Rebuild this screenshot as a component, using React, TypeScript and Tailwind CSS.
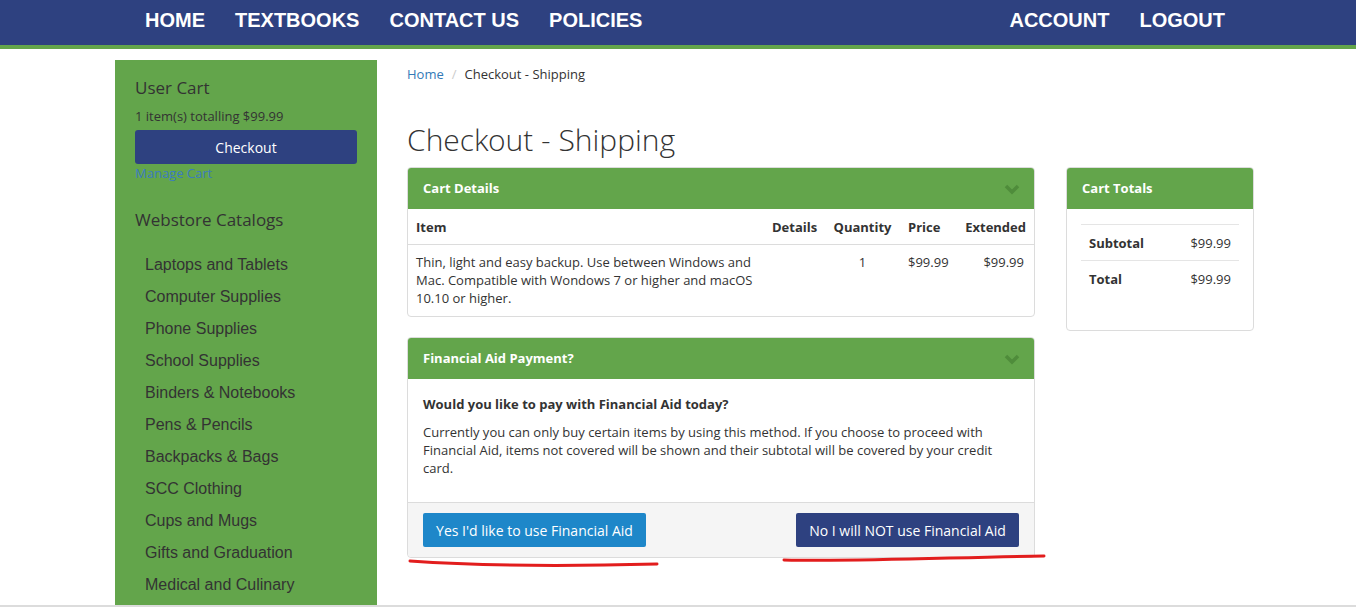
const sans = { fontFamily: '"Open Sans", "Liberation Sans", sans-serif' }

const catalogs = [
  'Laptops and Tablets',
  'Computer Supplies',
  'Phone Supplies',
  'School Supplies',
  'Binders & Notebooks',
  'Pens & Pencils',
  'Backpacks & Bags',
  'SCC Clothing',
  'Cups and Mugs',
  'Gifts and Graduation',
  'Medical and Culinary',
]

function Chevron() {
  return (
    <svg width="16" height="12" viewBox="0 0 16 12" className="text-[#4f8c3b]">
      <path d="M2 3 L8 9 L14 3" fill="none" stroke="currentColor" strokeWidth="3.5" />
    </svg>
  )
}

function PanelHeader({ title, chevron = true }: { title: string; chevron?: boolean }) {
  return (
    <div className="h-[41px] bg-[#63a54b] flex items-center justify-between pl-[15px] pr-[14px] rounded-t-[3px]">
      <span className="text-[13px] font-bold text-white">{title}</span>
      {chevron && <Chevron />}
    </div>
  )
}

export default function App() {
  return (
    <div className="relative h-[607px] overflow-hidden bg-white flex flex-col text-[#333]" style={sans}>
      {/* top nav */}
      <nav
        className="h-[40px] pb-[5px] bg-[#2e4180] border-b-4 border-[#63a54b] box-content flex items-center justify-between pl-[145px] pr-[131px] text-white text-[20px] font-bold"
        style={{ fontFamily: '"Liberation Sans", Arial, sans-serif' }}
      >
        <div className="flex gap-[30px]">
          <span>HOME</span>
          <span>TEXTBOOKS</span>
          <span>CONTACT US</span>
          <span>POLICIES</span>
        </div>
        <div className="flex gap-[30px]">
          <span>ACCOUNT</span>
          <span>LOGOUT</span>
        </div>
      </nav>

      <div className="flex-1 flex pl-[115px] border-b-2 border-[#dcdcdc] min-h-0">
        {/* sidebar */}
        <aside className="w-[262px] mt-[11px] bg-[#63a54b] pt-[17px] px-[20px] shrink-0">
          <h3 className="text-[17px] leading-[22px] font-medium">User Cart</h3>
          <p className="text-[13px] leading-[18px] mt-[8px]">1 item(s) totalling $99.99</p>
          <button className="mt-[5px] w-full h-[34px] bg-[#2e4180] text-white text-[14px] rounded-[3px]">Checkout</button>
          <a className="block text-[13px] leading-[18px] text-[#3b7bc0]">Manage Cart</a>
          <h3 className="text-[17px] leading-[22px] font-medium mt-[27px]">Webstore Catalogs</h3>
          <ul
            className="mt-[24px] pl-[10px] text-[16px] leading-[20px] text-[#333]"
            style={{ fontFamily: '"Liberation Sans", Arial, sans-serif' }}
          >
            {catalogs.map((c) => (
              <li key={c} className="h-[32px]">{c}</li>
            ))}
          </ul>
        </aside>

        {/* main */}
        <main className="w-[628px] ml-[30px] shrink-0">
          <div className="text-[13px] leading-[18px] flex gap-[8px] pt-[16px]">
            <a className="text-[#337ab7]">Home</a>
            <span className="text-[#ccc]">/</span>
            <span>Checkout - Shipping</span>
          </div>
          <h1
            className="text-[30px] leading-[36px] font-light mt-[39px]"
            style={{ fontFamily: '"Open Sans Light", "Open Sans", "Liberation Sans", sans-serif' }}
          >
            Checkout - Shipping
          </h1>

          <section className="mt-[9px] border border-[#dcdcdc] rounded-[4px]">
            <PanelHeader title="Cart Details" />
            <table className="w-full table-fixed text-[13px] leading-[18px]">
              <colgroup>
                <col className="w-[356px]" />
                <col className="w-[61px]" />
                <col className="w-[75px]" />
                <col className="w-[57px]" />
                <col />
              </colgroup>
              <thead>
                <tr className="border-b border-[#dcdcdc]">
                  <th className="text-left font-bold px-[8px] pt-[9px] pb-[8px]">Item</th>
                  <th className="text-right font-bold px-[8px] pt-[9px] pb-[8px]">Details</th>
                  <th className="text-center font-bold px-[8px] pt-[9px] pb-[8px]">Quantity</th>
                  <th className="text-left font-bold px-[8px] pt-[9px] pb-[8px]">Price</th>
                  <th className="text-right font-bold px-[8px] pt-[9px] pb-[8px]">Extended</th>
                </tr>
              </thead>
              <tbody>
                <tr className="align-top">
                  <td className="px-[8px] pt-[8px] pb-[9px]">
                    Thin, light and easy backup. Use between Windows and Mac. Compatible with Wondows 7 or higher and macOS 10.10 or higher.
                  </td>
                  <td className="px-[8px] pt-[8px] pb-[9px]"></td>
                  <td className="text-center px-[8px] pt-[8px] pb-[9px]">1</td>
                  <td className="text-left px-[8px] pt-[8px] pb-[9px]">$99.99</td>
                  <td className="text-right px-[10px] pt-[8px] pb-[9px]">$99.99</td>
                </tr>
              </tbody>
            </table>
          </section>

          <section className="mt-[20px] border border-[#dcdcdc] rounded-[4px]">
            <PanelHeader title="Financial Aid Payment?" />
            <div className="px-[15px] pt-[16px] pb-[15px] text-[13px] leading-[18px]">
              <p className="font-bold">Would you like to pay with Financial Aid today?</p>
              <p className="mt-[10px] mb-[10px]">
                Currently you can only buy certain items by using this method. If you choose to proceed with Financial Aid, items not covered will be shown and their subtotal will be covered by your credit card.
              </p>
            </div>
            <div className="bg-[#f5f5f5] border-t border-[#dcdcdc] px-[15px] pt-[10px] pb-[10px] flex justify-between rounded-b-[4px]">
              <button className="w-[223px] h-[34px] bg-[#1e87c9] text-white text-[14px] rounded-[2px]">Yes I'd like to use Financial Aid</button>
              <button className="w-[223px] h-[34px] bg-[#2e4180] text-white text-[14px] rounded-[2px]">No I will NOT use Financial Aid</button>
            </div>
          </section>
        </main>

        {/* totals */}
        <aside className="w-[188px] ml-[31px] shrink-0 mt-[118px] self-start border border-[#dcdcdc] rounded-[4px]">
          <PanelHeader title="Cart Totals" chevron={false} />
          <div className="px-[14px] pt-[15px] pb-[34px]">
            <table className="w-full text-[13px] leading-[18px]">
              <tbody>
                <tr className="border-t border-[#e5e5e5]">
                  <td className="font-bold px-[8px] pt-[9px] pb-[8px]">Subtotal</td>
                  <td className="text-right px-[8px] pt-[9px] pb-[8px]">$99.99</td>
                </tr>
                <tr className="border-t border-[#e5e5e5]">
                  <td className="font-bold px-[8px] pt-[9px] pb-[8px]">Total</td>
                  <td className="text-right px-[8px] pt-[9px] pb-[8px]">$99.99</td>
                </tr>
              </tbody>
            </table>
          </div>
        </aside>
      </div>

      {/* hand-drawn red underlines over the buttons */}
      <svg className="absolute left-0 top-0 pointer-events-none" width="1356" height="607">
        <path d="M410 561 C 480 566, 580 566, 657 564" fill="none" stroke="#e21d1d" strokeWidth="3" strokeLinecap="round" />
        <path d="M784 560 C 860 562, 960 557, 1044 556" fill="none" stroke="#e21d1d" strokeWidth="3" strokeLinecap="round" />
      </svg>
    </div>
  )
}
